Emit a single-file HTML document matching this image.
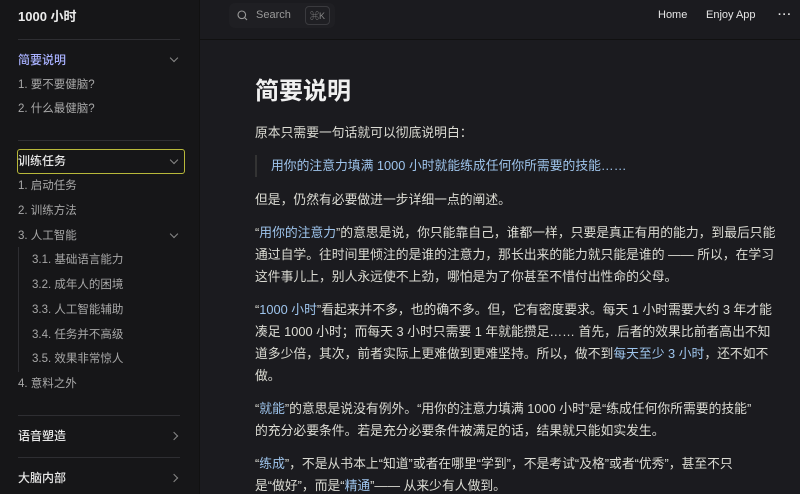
<!DOCTYPE html>
<html style="overflow:hidden"><head><meta charset="utf-8"><style>
*{margin:0;padding:0;box-sizing:border-box}
html,body{width:800px;height:494px;overflow:hidden}
body{background:#1b1b1f;font-family:"Liberation Sans","Noto Sans CJK SC",sans-serif;color:#dfdfd6;position:relative}
.side{position:absolute;left:0;top:0;width:200px;height:494px;background:#161618;border-right:1px solid #111}
.brand{position:absolute;left:18px;top:6px;font-size:13px;font-weight:600;color:#ececec}
.hr{position:absolute;left:18px;width:162px;height:1px;background:#2e2e32}
.it{position:absolute;left:18px;font-size:11.5px;color:#a8a8a8;line-height:16px}
.sec{position:absolute;left:18px;font-size:12px;font-weight:600;color:#e6e6e6;line-height:16px}
.chev{position:absolute;right:22px;width:6px;height:6px;border-right:1.3px solid #888;border-bottom:1.3px solid #888}
.d{transform:rotate(45deg)}.r{transform:rotate(-45deg)}
.top{position:absolute;left:200px;top:0;right:0;height:40px;border-bottom:1px solid #111;background:#1b1b1f}
.search{position:absolute;left:229px;top:3px;width:106px;height:25px;background:#1f1f23;border-radius:6px;font-size:11px;color:#9a9a9a}
.kbd{position:absolute;left:76px;top:3px;border:1px solid #3a3a3e;border-radius:4px;font-size:9px;padding:2px 4px;color:#888}
.nav{position:absolute;top:9px;font-size:11px;color:#e6e6e6}
.main{position:absolute;left:255px;top:74px;width:540px;font-size:12.8px;line-height:22px;color:#dcdcd4;white-space:nowrap}
h1{font-size:24px;font-weight:600;line-height:36px;color:#f0f0f0;margin-bottom:12px}
p{margin-bottom:11px}
.b{color:#9ec4ec}
blockquote{border-left:2px solid #333;padding-left:14px;margin-bottom:12px;color:#9ec4ec}
</style></head><body>
<div class="side">
<div class="brand">1000 小时</div>
<div class="hr" style="top:39px"></div>
<div class="sec" style="top:52px;color:#a8b1ff;font-weight:500">简要说明</div><div class="chev d" style="top:55px"></div>
<div class="it" style="top:77px">1. 要不要健脑?</div>
<div class="it" style="top:101px">2. 什么最健脑?</div>
<div class="hr" style="top:140px"></div>
<div style="position:absolute;left:17px;top:149px;width:168px;height:25px;border:1.5px solid #b8b83a;border-radius:3px"></div>
<div class="sec" style="top:153px;font-weight:500">训练任务</div><div class="chev d" style="top:157px"></div>
<div class="it" style="top:178px">1. 启动任务</div>
<div class="it" style="top:203px">2. 训练方法</div>
<div class="it" style="top:228px">3. 人工智能</div><div class="chev d" style="top:231px"></div>
<div style="position:absolute;left:18px;top:247px;width:1px;height:125px;background:#2e2e32"></div>
<div class="it" style="top:252px;left:32px">3.1. 基础语言能力</div>
<div class="it" style="top:277px;left:32px">3.2. 成年人的困境</div>
<div class="it" style="top:302px;left:32px">3.3. 人工智能辅助</div>
<div class="it" style="top:327px;left:32px">3.4. 任务并不高级</div>
<div class="it" style="top:351px;left:32px">3.5. 效果非常惊人</div>
<div class="it" style="top:376px">4. 意料之外</div>
<div class="hr" style="top:415px"></div>
<div class="sec" style="top:428px;font-weight:500">语音塑造</div><div class="chev r" style="top:433px"></div>
<div class="hr" style="top:457px"></div>
<div class="sec" style="top:470px;font-weight:500">大脑内部</div><div class="chev r" style="top:475px"></div>
</div>
<div class="top"></div>
<div class="search"><svg style="position:absolute;left:8px;top:7px" width="11" height="11" viewBox="0 0 11 11"><circle cx="4.8" cy="4.8" r="3.8" fill="none" stroke="#999" stroke-width="1.1"/><path d="M7.6 7.6L10 10" stroke="#999" stroke-width="1.1"/></svg><span style="position:absolute;left:27px;top:6px">Search</span><span class="kbd">⌘K</span></div>
<div class="nav" style="left:658px">Home</div>
<div class="nav" style="left:706px">Enjoy App</div>
<div class="nav" style="left:778px;letter-spacing:1px;font-weight:700">···</div>
<div class="main">
<h1>简要说明</h1>
<p>原本只需要一句话就可以彻底说明白：</p>
<blockquote>用你的注意力填满 1000 小时就能练成任何你所需要的技能……</blockquote>
<p>但是，仍然有必要做进一步详细一点的阐述。</p>
<p>“<span class="b">用你的注意力</span>”的意思是说，你只能靠自己，谁都一样，只要是真正有用的能力，到最后只能<br>通过自学。往时间里倾注的是谁的注意力，那长出来的能力就只能是谁的 —— 所以，在学习<br>这件事儿上，别人永远使不上劲，哪怕是为了你甚至不惜付出性命的父母。</p>
<p>“<span class="b">1000 小时</span>”看起来并不多，也的确不多。但，它有密度要求。每天 1 小时需要大约 3 年才能<br>凑足 1000 小时；而每天 3 小时只需要 1 年就能攒足…… 首先，后者的效果比前者高出不知<br>道多少倍，其次，前者实际上更难做到更难坚持。所以，做不到<span class="b">每天至少 3 小时</span>，还不如不<br>做。</p>
<p>“<span class="b">就能</span>”的意思是说没有例外。“用你的注意力填满 1000 小时”是“练成任何你所需要的技能”<br>的充分必要条件。若是充分必要条件被满足的话，结果就只能如实发生。</p>
<p>“<span class="b">练成</span>”，不是从书本上“知道”或者在哪里“学到”，不是考试“及格”或者“优秀”，甚至不只<br>是“做好”，而是“<span class="b">精通</span>”—— 从来少有人做到。</p>
</div>
</body></html>
